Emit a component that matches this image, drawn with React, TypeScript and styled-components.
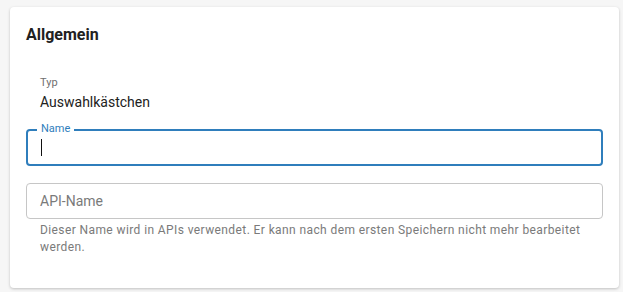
import { FC } from 'react';
import styled, { createGlobalStyle } from 'styled-components';

const App: FC = () => {
  return (
    <>
      <GlobalStyle />
      <Card>
        <Title>Allgemein</Title>
        <ReadOnly>
          <SmallLabel>Typ</SmallLabel>
          <Value>Auswahlkästchen</Value>
        </ReadOnly>
        <Field $focused>
          <FloatingLabel>Name</FloatingLabel>
          <Caret />
        </Field>
        <FieldGroup>
          <Field>
            <Placeholder>API-Name</Placeholder>
          </Field>
          <Helper>
            Dieser Name wird in APIs verwendet. Er kann nach dem ersten Speichern nicht mehr bearbeitet
            werden.
          </Helper>
        </FieldGroup>
      </Card>
    </>
  );
};

export default App;

const GlobalStyle = createGlobalStyle`
  html, body {
    margin: 0;
    padding: 0;
    background: #f6f6f6;
    font-family: Roboto, "Liberation Sans", sans-serif;
  }
  body {
    padding: 7px 4px 4px 10px;
  }
`;

const Card = styled.div`
  background: #fff;
  border-radius: 4px;
  box-shadow: 0 1px 3px rgba(0, 0, 0, 0.22);
  padding: 18px 16px 32px;
  display: flex;
  flex-direction: column;
`;

const Title = styled.div`
  font-size: 16px;
  line-height: 20px;
  font-weight: 700;
  color: #212121;
`;

const ReadOnly = styled.div`
  display: flex;
  flex-direction: column;
  gap: 3px;
  padding: 31px 14px 0;
`;

const SmallLabel = styled.div`
  font-size: 11px;
  line-height: 14px;
  color: #6f6f6f;
`;

const Value = styled.div`
  font-size: 14px;
  line-height: 18px;
  color: #212121;
`;

const Field = styled.div<{ $focused?: boolean }>`
  position: relative;
  box-sizing: border-box;
  height: ${({ $focused }) => ($focused ? '37px' : '36px')};
  margin-top: ${({ $focused }) => ($focused ? '18px' : '0')};
  border: ${({ $focused }) => ($focused ? '2px solid #2f7ebc' : '1px solid #c6c6c6')};
  border-radius: 4px;
  display: flex;
  align-items: center;
  padding: 0 13px;
`;

const FloatingLabel = styled.span`
  position: absolute;
  top: -9px;
  left: 9px;
  padding: 0 4px;
  background: #fff;
  font-size: 11px;
  line-height: 14px;
  color: #2f7ebc;
`;

const Caret = styled.span`
  display: block;
  width: 1px;
  height: 17px;
  background: #111;
`;

const Placeholder = styled.span`
  font-size: 14px;
  color: #7a7a7a;
`;

const FieldGroup = styled.div`
  display: flex;
  flex-direction: column;
  margin-top: 17px;
`;

const Helper = styled.div`
  margin-top: 3px;
  padding: 0 14px;
  font-size: 12px;
  line-height: 17px;
  letter-spacing: 0.4px;
  color: #7a7a7a;
`;
